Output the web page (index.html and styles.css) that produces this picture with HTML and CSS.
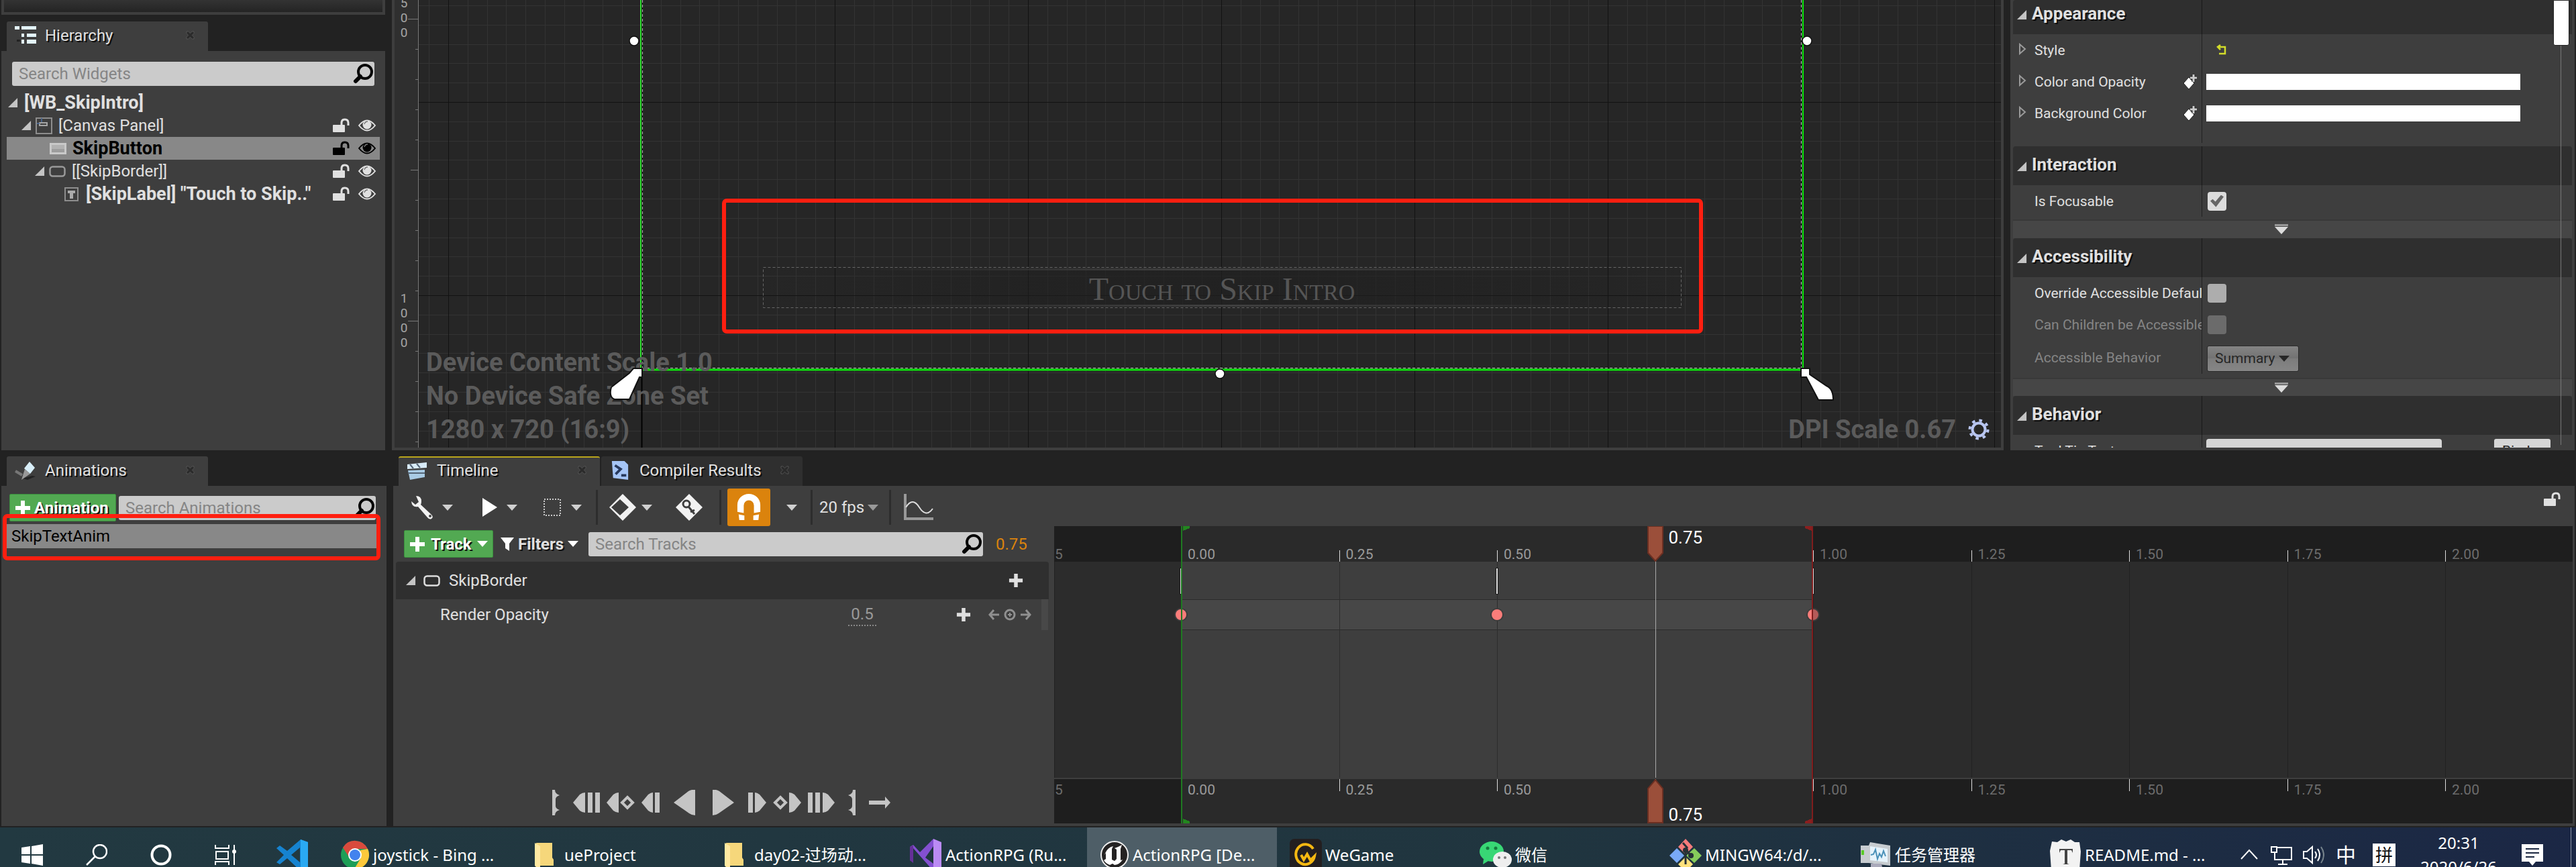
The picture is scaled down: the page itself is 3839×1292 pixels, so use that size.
FILE: index.html
```html
<!DOCTYPE html>
<html lang="en">
<head>
<meta charset="utf-8">
<title>WB_SkipIntro - Widget Blueprint Editor</title>
<link rel="stylesheet" href="styles.css">
</head>
<body>
<svg class="sprite" aria-hidden="true">
  <defs>
    <symbol id="i-search" viewBox="0 0 32 32"><circle cx="18" cy="13" r="10" fill="none" stroke="#050505" stroke-width="4"/><path d="M11 20 4 27" stroke="#050505" stroke-width="6" stroke-linecap="round"/></symbol>
    <symbol id="i-expand" viewBox="0 0 16 16"><path d="M15 0v15H0z" fill="#c4c4c4"/></symbol>
    <symbol id="i-collapsed" viewBox="0 0 12 18"><path d="M2 2v14l8-7z" fill="none" stroke="#9a9a9a" stroke-width="2"/></symbol>
    <symbol id="i-lock" viewBox="0 0 26 22"><rect x="0" y="10" width="18" height="11" rx="1" fill="currentColor"/><path d="M13 11V7q0-5 5-5t5 5v4" fill="none" stroke="currentColor" stroke-width="3"/></symbol>
    <symbol id="i-eye" viewBox="0 0 28 20"><path d="M2 10Q14-5 26 10 14 25 2 10z" fill="none" stroke="currentColor" stroke-width="2"/><circle cx="14" cy="9" r="6.5" fill="currentColor"/><path d="M10 8q1-4 5-4" fill="none" stroke="#777" stroke-width="1.3"/></symbol>
    <symbol id="i-close" viewBox="0 0 14 14"><path d="M1 1h3l3 3 3-3h3v3l-3 3 3 3v3h-3l-3-3-3 3H1v-3l3-3-3-3z" fill="#2b2b2b" stroke="#565656"/></symbol>
    <symbol id="i-border" viewBox="0 0 25 17"><rect x="1.500" y="1.500" width="22" height="14" rx="4" fill="none" stroke="currentColor" stroke-width="2.500"/></symbol>
    <symbol id="i-plus" viewBox="0 0 24 24"><path d="M9 1h6v8h8v6h-8v8H9v-8H1V9h8z" fill="currentColor"/></symbol>
    <symbol id="i-addkey" viewBox="0 0 22 22"><path d="m9 4 8 9-8 9-8-9z" fill="#fff" stroke="#222"/><path d="M16 0v11M11 5h10" stroke="#222" stroke-width="5"/><path d="M16 0v11M11 5h10" stroke="#ccc" stroke-width="3"/></symbol>
    <symbol id="i-more" viewBox="0 0 20 16"><path d="M0 0h20v3H0z" fill="#999"/><path d="M0 4h20L10 15z" fill="#dcdcdc"/></symbol>
    <symbol id="i-folder" viewBox="0 0 28 36"><path d="M2 0h24v22l2 3v9H2z" fill="#f6d77b"/><path d="M0 0 8 5v31l-2 4-6-6z" fill="#ffe9a2"/></symbol>
  </defs>
</svg>

<div class="upper">
  <div class="column">
    <div class="stub"></div>
    <div class="tabs"><div class="tab"><svg class="tab-icon" viewBox="0 0 32 28"><path d="M0 0h7v5H0zM10 0h22v5H10zM10 11h4v5h-4zM18 11h14v5H18zM10 20h4v6h-4zM18 20h14v6H18z" fill="#e3f5fb"/><path d="M3 20h5v3H3z" fill="#222"/></svg><span>Hierarchy</span><button class="close" aria-label="Close Hierarchy"><svg><use href="#i-close"/></svg></button></div></div>
    <section class="panel hierarchy">
      <div class="search"><input type="text" placeholder="Search Widgets" aria-label="Search Widgets"><svg><use href="#i-search"/></svg></div>
      <ul class="tree">
        <li class="bold"><svg class="expand"><use href="#i-expand"/></svg><span>[WB_SkipIntro]</span></li>
        <li class="level-1"><svg class="expand"><use href="#i-expand"/></svg><svg class="kind" viewBox="0 0 25 25"><path d="M1 1h23v23H1z" fill="none" stroke="#8d8d8d" stroke-width="2"/><rect x="6" y="8" width="11" height="4" fill="none" stroke="#a5a5a5" stroke-width="2"/><path d="M9 1v6M2 9h4" stroke="#49648b" stroke-width="2"/></svg><span>[Canvas Panel]</span><button aria-label="Lock"><svg class="lock"><use href="#i-lock"/></svg></button><button aria-label="Visibility"><svg class="eye"><use href="#i-eye"/></svg></button></li>
        <li class="level-2 leaf bold selected"><svg class="kind" viewBox="0 0 25 25"><path d="M0 4h25v17H0z" fill="#c9c9c9"/><path d="M3 7h19v6H3z" fill="#b2b2b2"/><path d="M3 13h19v5H3z" fill="#9d9d9d"/></svg><span>SkipButton</span><button aria-label="Lock"><svg class="lock"><use href="#i-lock"/></svg></button><button aria-label="Visibility"><svg class="eye"><use href="#i-eye"/></svg></button></li>
        <li class="level-2"><svg class="expand"><use href="#i-expand"/></svg><svg class="kind dim"><use href="#i-border"/></svg><span>[[SkipBorder]]</span><button aria-label="Lock"><svg class="lock"><use href="#i-lock"/></svg></button><button aria-label="Visibility"><svg class="eye"><use href="#i-eye"/></svg></button></li>
        <li class="level-3 leaf bold"><svg class="kind" viewBox="0 0 25 25"><path d="M3 3h19v19H3z" fill="none" stroke="#8d8d8d" stroke-width="2"/><path d="M7 7h11v4h-3v8h-5v-8H7z" fill="#aaa"/></svg><span>[SkipLabel] "Touch to Skip.."</span><button aria-label="Lock"><svg class="lock"><use href="#i-lock"/></svg></button><button aria-label="Visibility"><svg class="eye"><use href="#i-eye"/></svg></button></li>
      </ul>
    </section>
  </div>

  <main class="designer">
    <div class="ruler">
      <svg aria-hidden="true"><g stroke="#777" stroke-width="1"><path d="M20 28.500h16M20 478.500h16M24 253.500h12M31 73.500h5M31 118.500h5M31 163.500h5M31 208.500h5M31 298.500h5M31 343.500h5M31 388.500h5M31 433.500h5M31 523.500h5M31 568.500h5M31 613.500h5M31 658.500h5"/></g></svg>
      <div class="mark first">5<br>0<br>0</div>
      <div class="mark second">1<br>0<br>0<br>0</div>
    </div>
    <div class="canvas">
      <svg class="grid" aria-hidden="true">
        <defs><pattern id="grid" x="44" y="-136" width="288" height="288" patternUnits="userSpaceOnUse">
          <path d="M29.500 0v288M58.500 0v288M86.500 0v288M115.500 0v288M144.500 0v288M173.500 0v288M202.500 0v288M230.500 0v288M259.500 0v288M0 29.500h288M0 58.500h288M0 86.500h288M0 115.500h288M0 144.500h288M0 173.500h288M0 202.500h288M0 230.500h288M0 259.500h288" stroke="#333"/>
          <path d="M.5 0v288M0 .5h288" stroke="#121212"/>
        </pattern>
        <linearGradient id="fade"><stop offset="0" stop-color="#1e1e1e" stop-opacity="0"/><stop offset=".4" stop-color="#202020" stop-opacity=".7"/><stop offset=".6" stop-color="#202020" stop-opacity=".7"/><stop offset="1" stop-color="#1e1e1e" stop-opacity="0"/></linearGradient>
        <linearGradient id="edge"><stop offset=".1" stop-color="#444" stop-opacity="0"/><stop offset=".5" stop-color="#444" stop-opacity=".9"/><stop offset=".9" stop-color="#444" stop-opacity="0"/></linearGradient></defs>
        <rect width="100%" height="100%" fill="url(#grid)"/>
        <path d="M332.500 552v116" stroke="#000" stroke-width="2"/>
        <path d="M331 0v550" stroke="#2ee02e" stroke-width="2"/>
        <path d="M332 551h1731" stroke="#0be60b" stroke-width="3"/>
        <path d="M2063 0v550" stroke="#0be60b" stroke-width="2"/>
        <path d="M333.500 0v549M2060.500 0v549M333 548.500h1728" stroke="#bbb" stroke-dasharray="4 3"/>
        <rect x="513" y="400" width="1368" height="58" fill="url(#fade)"/>
        <rect x="513" y="400" width="1368" height="3" fill="url(#edge)"/>
        <rect x="513" y="454" width="1368" height="3" fill="url(#edge)"/>
        <rect x="513.500" y="398.500" width="1368" height="60" fill="none" stroke="#666" stroke-dasharray="4 3"/>
        <g fill="#fff" stroke="#111" stroke-width="1.500"><circle cx="321" cy="61" r="7"/><circle cx="2069" cy="61" r="7"/><circle cx="1194" cy="557" r="7"/></g>
      </svg>
      <p class="preview">Touch to Skip Intro</p>
      <div class="highlight callout"></div>
      <div class="device">Device Content Scale 1.0<br>No Device Safe Zone Set<br>1280 x 720 (16:9)</div>
      <svg class="grid" aria-hidden="true"><g fill="#fff" stroke="#111" stroke-width="2"><path d="M320 549h13v13h-4l-15 33h-22q-9-3-5-18l27-21z"/><path d="M2060 549h13v9l25 17q10 4 10 21h-22l-18-34h-8z"/></g></svg>
      <div class="dpi"><span>DPI Scale 0.67</span><button aria-label="DPI settings"><svg viewBox="0 0 32 32"><g fill="none" stroke="#b9c6f1"><circle cx="16" cy="16" r="9.500" stroke-width="4"/><circle cx="16" cy="16" r="13.500" stroke-width="4" stroke-dasharray="4.500 6.100"/></g></svg></button></div>
    </div>
  </main>

  <aside class="details">
    <section>
      <h2 class="first"><svg><use href="#i-expand"/></svg><span>Appearance</span></h2>
      <div class="prop"><span class="name"><svg class="arrow"><use href="#i-collapsed"/></svg>Style</span><div class="value"><button class="reset" aria-label="Reset to default"><svg viewBox="0 0 18 18"><path d="M4 4h10v10H5M7 1 3 4l4 4" fill="none" stroke="#d2dc2a" stroke-width="2.500"/></svg></button></div></div>
      <div class="prop"><span class="name"><svg class="arrow"><use href="#i-collapsed"/></svg>Color and Opacity<svg class="key"><use href="#i-addkey"/></svg></span><div class="value"><button class="swatch" aria-label="Color and Opacity"></button></div></div>
      <div class="prop"><span class="name"><svg class="arrow"><use href="#i-collapsed"/></svg>Background Color<svg class="key"><use href="#i-addkey"/></svg></span><div class="value"><button class="swatch" aria-label="Background Color"></button></div></div>
      <div class="prop spacer"><span></span><div class="value"></div></div>
    </section>
    <section>
      <h2><svg><use href="#i-expand"/></svg><span>Interaction</span></h2>
      <div class="prop"><label class="name" for="focusable">Is Focusable</label><div class="value"><input type="checkbox" id="focusable" checked></div></div>
      <button class="more" aria-label="Show advanced"><svg><use href="#i-more"/></svg></button>
    </section>
    <section>
      <h2><svg><use href="#i-expand"/></svg><span>Accessibility</span></h2>
      <div class="prop"><label class="name" for="override">Override Accessible Defaults</label><div class="value"><input type="checkbox" id="override"></div></div>
      <div class="prop"><label class="name off" for="children">Can Children be Accessible</label><div class="value"><input type="checkbox" id="children" disabled></div></div>
      <div class="prop tall"><label class="name off" for="behavior">Accessible Behavior</label><div class="value"><div class="combo"><select id="behavior" disabled><option>Summary</option></select></div></div></div>
      <button class="more" aria-label="Show advanced"><svg><use href="#i-more"/></svg></button>
    </section>
    <section>
      <h2><svg><use href="#i-expand"/></svg><span>Behavior</span></h2>
      <div class="prop"><label class="name" for="tooltip">Tool Tip Text</label><div class="value"><input type="text" id="tooltip"><span class="flag"></span><button class="bind">Bind <i class="caret"></i></button></div></div>
    </section>
    <div class="scroll"></div>
  </aside>
</div>

<div class="lower">
  <div class="column animations">
    <div class="tabs"><div class="tab"><svg class="tab-icon" viewBox="0 0 32 28"><path d="M1 15l10 6" stroke="#777" stroke-width="4"/><path d="m12 26 14-4 5 1-12 5z" fill="#222"/><path d="m15 12 8 7-13 9z" fill="#999"/><path d="m22 1 8 9-7 9-9-8z" fill="#d8eef8"/></svg><span>Animations</span><button class="close" aria-label="Close Animations"><svg><use href="#i-close"/></svg></button></div></div>
    <section class="panel">
      <div class="bar"><button class="green"><svg><use href="#i-plus"/></svg>Animation</button><div class="search"><input type="text" placeholder="Search Animations" aria-label="Search Animations"><svg><use href="#i-search"/></svg></div></div>
      <ul class="list"><li>SkipTextAnim</li></ul>
      <div class="highlight"></div>
    </section>
  </div>

  <div class="column">
    <div class="tabs">
      <div class="tab active"><svg class="tab-icon" viewBox="0 0 32 28"><path d="m1 5 29-3v8L1 12z" fill="#d8ebf7"/><path d="m2 14 25-1v11L5 28z" fill="#a9cbe4"/><path d="m5 5 5 6m5-7 5 6M2 18h25" stroke="#567" stroke-width="2"/></svg><span>Timeline</span><button class="close" aria-label="Close Timeline"><svg><use href="#i-close"/></svg></button></div>
      <div class="tab back"><svg class="tab-icon" viewBox="0 0 32 30"><path d="M3 0h20l6 6v24L5 27z" fill="#a5c5f6"/><path d="m8 7 9 6-8 8m9 2h8" fill="none" stroke="#27395c" stroke-width="4"/></svg><span>Compiler Results</span><button class="close" aria-label="Close Compiler Results"><svg><use href="#i-close"/></svg></button></div>
    </div>
    <section class="panel timeline">
      <div class="toolbar">
        <button aria-label="Options"><svg viewBox="0 0 36 36"><path d="M8 1q8 0 8 8 0 3-1 5l15 14q5 4 1 7-3 2-7-3L11 17q-9 2-10-8l6 5 5-4z" fill="#f2f2f2"/><circle cx="29" cy="31" r="2" fill="#444"/></svg><i class="caret"></i></button>
        <button aria-label="Playback"><svg viewBox="0 0 36 36"><path d="m11 4 22 14-22 14z" fill="#fff"/></svg><i class="caret"></i></button>
        <button class="selection" aria-label="Selection"><svg viewBox="0 0 36 36"><rect x="7" y="6" width="24" height="24" fill="none" stroke="#ccc" stroke-width="2" stroke-dasharray="2 2"/></svg><i class="caret"></i></button>
        <hr>
        <button class="wide" aria-label="Key options"><svg viewBox="0 0 40 40"><path d="m20 0 20 20-20 20L0 20z" fill="#f2f2f2"/><path d="m16 8 13 12-13 12L3 20z" fill="#3e3e3e"/></svg><i class="caret"></i></button>
        <button class="wide auto" aria-label="Auto key"><svg viewBox="0 0 40 40"><path d="m20 0 20 20-20 20L0 20z" fill="#f2f2f2"/><circle cx="16" cy="15" r="5" fill="none" stroke="#3e3e3e" stroke-width="3"/><path d="m19 19 9 11m-6-3 6-3" fill="none" stroke="#3e3e3e" stroke-width="3"/></svg></button>
        <hr>
        <button class="snap" aria-label="Snapping"><svg viewBox="0 0 40 42"><path d="M2 28V17a18 17 0 0 1 36 0v11l-10 2V18a8 8 0 0 0-16 0v12zM4 32l9 2v7H5zM36 32l-9 2v7h8z" fill="#fff"/></svg></button>
        <button class="only-caret" aria-label="Snapping options"><i class="caret"></i></button>
        <hr>
        <div class="fps"><select aria-label="Frame rate"><option>20 fps</option></select><i class="caret"></i></div>
        <hr>
        <button class="curve" aria-label="Curve editor"><svg viewBox="0 0 44 40"><path d="M2 0v37h42" fill="none" stroke="#999" stroke-width="4"/><path d="M3 20q10-16 20 0t20 2" fill="none" stroke="#ddd" stroke-width="2"/></svg></button>
        <button class="toolbar-lock" aria-label="Lock timeline"><svg><use href="#i-lock"/></svg></button>
      </div>
      <div class="sequencer">
        <div class="tracks">
          <div class="bar">
            <button class="green"><svg><use href="#i-plus"/></svg>Track <i class="caret"></i></button>
            <button class="filters"><svg viewBox="0 0 20 20"><path d="M0 0h20l-7 9v11l-6-4V9z" fill="#fff"/></svg>Filters<i class="caret"></i></button>
            <div class="search"><input type="text" placeholder="Search Tracks" aria-label="Search Tracks"><svg><use href="#i-search"/></svg></div>
            <output>0.75</output>
          </div>
          <div class="track"><svg class="expand"><use href="#i-expand"/></svg><svg class="kind"><use href="#i-border"/></svg><span>SkipBorder</span><button aria-label="Add track"><svg><use href="#i-plus"/></svg></button></div>
          <div class="subtrack"><label for="opacity">Render Opacity</label><input id="opacity" type="text" value="0.5"><button aria-label="Add section"><svg><use href="#i-plus"/></svg></button><svg class="keys" viewBox="0 0 64 18"><g fill="none" stroke="#909090" stroke-width="3"><path d="M16 9H2m6-7L2 9l6 7M48 9h14m-6-7 6 7-6 7"/><circle cx="32" cy="9" r="7"/><path d="M32 6v6M29 9h6" stroke-width="2"/></g></svg><i class="grip"></i></div>
          <div class="transport">
            <button aria-label="Set start"><svg width="11" height="38" viewBox="0 0 11 38"><path d="M0 0h4q0 6 7 8-6 2-6 6v10q0 4 6 6-7 2-7 8H0z"/></svg></button>
            <span>
              <button aria-label="To front"><svg width="40" height="30" viewBox="0 0 40 30"><path d="M0 15 10 3q4-3 8-3v30q-4 0-8-3zM22 0h7v30h-7zM33 0h7v30h-7z"/></svg></button>
              <button aria-label="Previous key"><svg width="42" height="30" viewBox="0 0 42 30"><path d="M0 15 10 3q4-3 8-3v30q-4 0-8-3z"/><path d="m31 7 8 8-8 8-8-8z" fill="none" stroke="#c4c4c4" stroke-width="4"/></svg></button>
              <button aria-label="Previous frame"><svg width="28" height="30" viewBox="0 0 28 30"><path d="M0 15 10 3q4-3 7-3v30q-3 0-7-3zM20 0h7v30h-7z"/></svg></button>
            </span>
            <span class="plays">
              <button aria-label="Play reverse"><svg width="32" height="38" viewBox="0 0 32 38"><path d="M0 19 22 2q5-3 10-2v38q-5 0-9-3z"/></svg></button>
              <button aria-label="Play"><svg width="32" height="38" viewBox="0 0 32 38"><path d="M32 19 10 2Q5-1 0 0v38q5 0 9-3z"/></svg></button>
            </span>
            <span>
              <button aria-label="Next frame"><svg width="28" height="30" viewBox="0 0 28 30"><path d="M28 15 18 3q-4-3-7-3v30q3 0 7-3zM1 0h7v30H1z"/></svg></button>
              <button aria-label="Next key"><svg width="42" height="30" viewBox="0 0 42 30"><path d="M42 15 32 3q-4-3-8-3v30q4 0 8-3z"/><path d="m11 7 8 8-8 8-8-8z" fill="none" stroke="#c4c4c4" stroke-width="4"/></svg></button>
              <button aria-label="To end"><svg width="40" height="30" viewBox="0 0 40 30"><path d="M40 15 30 3q-4-3-8-3v30q4 0 8-3zM0 0h7v30H0zM11 0h7v30h-7z"/></svg></button>
            </span>
            <button aria-label="Set end"><svg width="11" height="38" viewBox="0 0 11 38"><path d="M11 0H7q0 6-7 8 6 2 6 6v10q0 4-6 6 7 2 7 8h4z"/></svg></button>
            <button aria-label="No looping"><svg width="32" height="20" viewBox="0 0 32 20"><path d="M0 7h24V1l8 9-8 9v-6H0z"/></svg></button>
          </div>
        </div>
        <div class="sequence">
          <div class="scale">
            <div class="tick out"><span class="cut">5</span></div>
            <div class="tick">0.00</div><div class="tick">0.25</div><div class="tick">0.50</div><div class="tick"><div class="playhead"><svg viewBox="0 0 26 53"><path d="M2 0h22v40L13 52 2 40z" fill="#9b4f3a" stroke="#6b2f22" stroke-width="2"/></svg><b>0.75</b></div></div>
            <div class="tick out">1.00</div><div class="tick out">1.25</div><div class="tick out">1.50</div><div class="tick out">1.75</div><div class="tick out">2.00</div>
          </div>
          <div class="lanes">
            <div class="lane out"></div>
            <div class="lane"><i class="bar-key"></i><i class="dot"></i></div><div class="lane"></div><div class="lane"><i class="bar-key"></i><i class="dot"></i></div><div class="lane now"></div>
            <div class="lane out"><i class="bar-key"></i><i class="dot"></i></div><div class="lane out"></div><div class="lane out"></div><div class="lane out"></div><div class="lane out"></div>
          </div>
          <div class="scale bottom">
            <div class="tick out"><span class="cut">5</span></div>
            <div class="tick">0.00</div><div class="tick">0.25</div><div class="tick">0.50</div><div class="tick"><div class="playhead"><svg viewBox="0 0 26 66"><path d="M2 65h22V14L13 1 2 14z" fill="#9b4f3a" stroke="#6b2f22" stroke-width="2"/></svg><b>0.75</b></div></div>
            <div class="tick out">1.00</div><div class="tick out">1.25</div><div class="tick out">1.50</div><div class="tick out">1.75</div><div class="tick out">2.00</div>
          </div>
          <div class="range"><div></div></div>
        </div>
      </div>
    </section>
  </div>
</div>

<footer class="taskbar">
  <nav>
    <button class="sys" aria-label="Start"><svg viewBox="0 0 32 32"><path d="M0 5 13 3v12H0zM15 3 32 0v15H15zM0 17h13v12L0 27zM15 17h17v15l-17-3z" fill="#fff"/></svg></button>
    <button class="sys" aria-label="Search"><svg viewBox="0 0 32 32"><g fill="none" stroke="#fff" stroke-width="2.500"><circle cx="21" cy="11" r="10"/><path d="M14 18 1 31"/></g></svg></button>
    <button class="sys" aria-label="Cortana"><svg viewBox="0 0 32 32"><circle cx="16" cy="16" r="13.500" fill="none" stroke="#fff" stroke-width="4"/></svg></button>
    <button class="sys" aria-label="Task view"><svg viewBox="0 0 32 32"><g fill="none" stroke="#fff" stroke-width="2"><path d="M1 1v5h20V1M2 11h18v11H2zM1 31v-5h20v5M29 1v30"/></g><circle cx="29" cy="11" r="3" fill="#fff"/></svg></button>
    <button class="sys code" aria-label="Visual Studio Code"><svg viewBox="0 0 48 48"><path d="m36 1 11 4v38l-11 5L16 29 5 38l-5-3 11-11L0 14l5-4 11 8zM35 13 22 24l13 11z" fill="#1683d0" fill-rule="evenodd"/><path d="m36 1 11 4v38l-11 5z" fill="#2aa9f2"/></svg></button>
  </nav>
  <button class="app"><svg viewBox="0 0 44 44"><circle cx="22" cy="22" r="21" fill="#1e9e57"/><path d="M4 11a21 21 0 0 1 37 2H22l-9 12z" fill="#d94a3d"/><path d="M41 13a21 21 0 0 1-20 30l10-17-1-11z" fill="#fdc93c"/><circle cx="22" cy="22" r="10" fill="#fff"/><circle cx="22" cy="22" r="8" fill="#4383ee"/></svg>joystick - Bing ...</button>
  <button class="app folder"><svg><use href="#i-folder"/></svg>ueProject</button>
  <button class="app folder"><svg><use href="#i-folder"/></svg>day02-过场动...</button>
  <button class="app"><svg class="big" viewBox="0 0 48 48"><path d="m35 0 12 5v38l-12 5z" fill="#bb8bf4"/><path d="M35 0v48L5 14v20l-5-2V12l5-3 10 11zM23 28l12 9V11z" fill="#8350d0" fill-rule="evenodd"/><path d="M5 10 0 12v20l5 4z" fill="#653098"/></svg>ActionRPG (Ru...</button>
  <button class="app current"><svg viewBox="0 0 44 44"><circle cx="22" cy="22" r="20" fill="#242222" stroke="#eee" stroke-width="2"/><path d="M7 22q4-11 13-13l-2 4v16l4 2 3-3V14l-3-2q6-2 11-5l-2 6v17l3-1q-4 7-12 8l-3-2-4 2q-6-2-9-7l3-2V19z" fill="#fff"/></svg>ActionRPG [De...</button>
  <button class="app"><svg class="big" viewBox="0 0 48 48"><rect width="48" height="48" rx="7" fill="#231f20"/><path d="M35 15a14 15 0 1 0 2 11l-6 6-5-9-5 8-4-7" fill="none" stroke="#f5b812" stroke-width="4"/></svg>WeGame</button>
  <button class="app"><svg class="big" viewBox="0 0 48 48"><ellipse cx="18" cy="19" rx="18" ry="15" fill="#38d775"/><path d="m6 30-1 8 8-5z" fill="#38d775"/><ellipse cx="34" cy="31" rx="14" ry="12" fill="#eee"/><circle cx="12" cy="14" r="2.500" fill="#16793e"/><circle cx="24" cy="14" r="2.500" fill="#16793e"/><circle cx="29" cy="28" r="2" fill="#777"/><circle cx="38" cy="28" r="2" fill="#777"/></svg>微信</button>
  <button class="app"><svg class="big" viewBox="0 0 48 48"><path d="m24 0 11 12-11 11-11-11z" fill="#f67b7b"/><path d="m37 14 11 11-11 11-12-11z" fill="#86cc5b"/><path d="m11 14 11 11-11 11L0 25z" fill="#79a9f6"/><path d="m24 27 11 11-11 11-11-11z" fill="#ffe17c"/><path d="m20 6 7 8m-3 0v24m1-21 7 8" stroke="#263036" stroke-width="3" fill="none"/><circle cx="24" cy="17" r="4" fill="#263036"/><circle cx="32" cy="25" r="4" fill="#263036"/></svg>MINGW64:/d/...</button>
  <button class="app"><svg class="big" viewBox="0 0 48 48"><path d="M2 10h12l2-5 30 5v30l-32-4H2z" fill="#c7ccd0"/><path d="m16 11 26 4v20l-26-3z" fill="#e6f3fb"/><path d="m17 24 4-1 3-7 3 14 3-8 3 5 3-9 3 8" fill="none" stroke="#4b91b9" stroke-width="2"/><path d="M17 37h16l2 11H17z" fill="#aab"/><path d="M3 17h4v7H3z" fill="#5acc28"/></svg>任务管理器</button>
  <button class="app"><svg class="big" viewBox="0 0 48 48"><path d="m4 4 8 1 6-4 7 3 7-3 6 4 7 0 2 14-2 28H3L1 18z" fill="#f2f2f2"/><path d="M15 15h20v6l-2-4h-6v20l3 1H20l3-1V17h-6l-2 4z" fill="#444"/></svg>README.md - ...</button>
  <div class="tray">
    <button aria-label="Hidden icons"><svg viewBox="0 0 32 32"><path d="m4 22 12-13 12 13" fill="none" stroke="#fff" stroke-width="2"/></svg></button>
    <svg viewBox="0 0 32 32"><g fill="none" stroke="#fff" stroke-width="2"><path d="M10 5h21v18H6V12M1 4h8v8H1zM18 23v7m-7 0h14"/></g></svg>
    <svg viewBox="0 0 32 32"><g fill="none" stroke="#fff" stroke-width="2"><path d="M1 11h5l8-7v24l-8-7H1zM18 11q4 5 0 10m4-14q6 9 0 18"/><path d="M27 4q8 12 0 24" stroke="#78858d"/></g></svg>
    <span class="ime">中</span>
    <span class="ime boxed">拼</span>
    <time>20:31<br>2020/6/26</time>
    <button aria-label="Notifications"><svg viewBox="0 0 32 32"><path d="M0 0h32v26H21l-5 6-5-6H0z" fill="#fff"/><path d="M6 7h20M6 13h20M6 19h13" stroke="#1b2740" stroke-width="2"/></svg></button>
  </div>
</footer>
</body>
</html>
```
FILE: styles.css
```css
* { box-sizing: border-box; }
body {
  margin: 0;
  height: 100vh;
  display: grid;
  grid-template-rows: 671fr 562fr 59px;
  overflow: hidden;
  background: #222;
  color: #e0e0e0;
  font: 24px/34px Roboto, sans-serif;
}
.sprite { position: absolute; width: 0; height: 0; }
svg { display: block; flex: none; }
button, input, select { font: inherit; color: inherit; margin: 0; padding: 0; border: 0; background: none; }
button { display: flex; align-items: center; }
ul { list-style: none; margin: 0; padding: 0; }
.caret { width: 0; height: 0; border: 8px solid transparent; border-top: 9px solid #d0d0d0; border-bottom: 0; flex: none; }

.upper, .lower { display: grid; gap: 10px; padding: 0 2px; min-height: 0; }
.upper { grid-template-columns: 572px minmax(0, 1fr) 841px; }
.lower { grid-template-columns: 574px minmax(0, 1fr); padding: 9px 2px 2px; }
.column { display: flex; flex-direction: column; min-width: 0; min-height: 0; }
.stub { height: 22px; margin-bottom: 10px; background: linear-gradient(#333, #242424); border: 4px solid #3e3e3e; border-top: 0; flex: none; }
.tabs { display: flex; gap: 2px; padding-left: 8px; }
.tab { display: flex; align-items: center; width: 300px; height: 44px; padding: 0 20px 3px 12px; gap: 13px; background: #3e3e3e; border-radius: 3px 3px 0 0; text-shadow: 2px 2px 0 #0c0c0c; }
.tab.active { border-top: 2px solid #b9a51c; padding-bottom: 5px; }
.tab.back { background: #2f2f2f; }
.tab-icon { width: 32px; height: 28px; }
.close { margin-left: auto; }
.close svg { width: 13px; height: 13px; }
.panel { flex: 1; min-height: 0; background: #3e3e3e; position: relative; }

.search { display: flex; align-items: center; height: 36px; background: #cbcbcb; border-radius: 3px; flex: 1; }
.search input { flex: 1; min-width: 0; padding-left: 10px; color: #222; outline: 0; }
.search input::placeholder { color: #858585; opacity: 1; }
.search svg { width: 32px; height: 32px; }

.hierarchy { padding: 16px 8px; }
.hierarchy .search { margin: 0 8px 8px; }
.tree li { display: flex; align-items: center; height: 34px; padding: 0 5px 0 2px; }
.tree span { margin-right: auto; padding-left: 9px; }
.tree .level-1 { padding-left: 22px; }
.tree .level-2 { padding-left: 42px; }
.tree .level-3 { padding-left: 64px; }
.tree .leaf { padding-left: 64px; }
.tree .level-3.leaf { padding-left: 84px; }
.bold { font-weight: 700; font-size: 27px; }
.expand { width: 15px; height: 15px; }
.kind { width: 25px; height: 25px; color: #ddd; }
.tree .kind { margin-left: 6px; }
.tree .leaf .kind { margin-left: 0; }
.kind.dim { height: 17px; color: #999; }
.lock { width: 26px; height: 22px; }
.eye { width: 28px; height: 20px; margin-left: 11px; }
.selected { background: #888; color: #000; }

.designer { display: flex; border: 4px solid #3e3e3e; border-top: 0; overflow: hidden; min-height: 0; }
.ruler { position: relative; width: 36px; background: #2f2f2f; border-right: 1px solid #777; flex: none; }
.ruler svg { width: 36px; height: 100%; }
.mark { position: absolute; left: 8px; width: 12px; font-size: 19px; line-height: 22px; text-align: center; color: #a5a5a5; }
.mark.first { top: -6px; }
.mark.second { top: 434px; }
.canvas { position: relative; flex: 1; background: #262626; overflow: hidden; }
.grid { position: absolute; inset: 0; width: 100%; height: 100%; }
.preview { position: absolute; left: 513px; width: 1368px; top: 400px; margin: 0; text-align: center; font: 48px/62px "Liberation Serif", serif; font-variant: small-caps; color: #555; }
.highlight { position: absolute; border: 6px solid #ff1f10; border-radius: 7px; pointer-events: none; }
.callout { left: 452px; top: 296px; width: 1462px; height: 201px; }
.device { position: absolute; left: 11px; bottom: 2px; font: 700 38px/50px Roboto, sans-serif; color: #5b5b5b; }
.dpi { position: absolute; right: 17px; bottom: 2px; display: flex; align-items: center; gap: 18px; font: 700 38px/50px Roboto, sans-serif; color: #5b5b5b; }
.dpi svg { width: 32px; height: 32px; }

.details { position: relative; background: #3e3e3e; padding: 0 4px; border-bottom: 4px solid #3e3e3e; overflow: hidden; min-height: 0; font-size: 21px; }
.details h2 { display: flex; align-items: center; gap: 7px; height: 58px; margin: 0; padding: 0 6px 4px; font-size: 26px; text-shadow: 2px 2px 0 #0c0c0c; border-radius: 4px 4px 0 0; background: linear-gradient(90deg, transparent 281px, #191919 281px, #191919 282px, transparent 282px), #2f2f2f; }
.details h2.first { height: 51px; padding-bottom: 12px; }
.details h2 svg { width: 15px; height: 15px; margin-top: 6px; }
.prop { display: grid; grid-template-columns: 281px 1fr; height: 47px; }
.prop .name { display: flex; align-items: center; padding: 1px 0 0 32px; overflow: hidden; white-space: nowrap; }
.prop .off { color: #858585; }
.arrow { width: 12px; height: 18px; margin: -4px 12px 0 -24px; }
.key { width: 22px; height: 22px; margin-left: auto; margin-right: 6px; }
.value { display: flex; align-items: center; padding-left: 6px; border-left: 1px solid #222; }
.prop.spacer { height: 21px; margin-bottom: 5px; }
.prop.tall { height: 50px; }
.prop.tall + .more { height: 27px; margin-top: 6px; }
.reset { padding-left: 14px; }
.reset svg { width: 18px; height: 18px; }
.swatch { width: 468px; height: 24px; background: #fff; }
.value input[type=checkbox] { appearance: none; display: grid; place-items: center; width: 28px; height: 28px; margin-left: 2px; border-radius: 4px; background: #adadad; }
.value input[type=checkbox]:checked { background: #dcdcdc; }
.value input[type=checkbox]:checked::before { content: ""; width: 20px; height: 18px; background: #666; clip-path: polygon(0 50%, 18% 35%, 38% 55%, 80% 0, 100% 15%, 42% 100%); }
.value input[type=checkbox]:disabled { background: #6b6b6b; }
.combo { position: relative; margin: 4px 0 0 1px; }
.combo select { appearance: none; width: 137px; height: 39px; padding-left: 11px; color: #262626; opacity: 1; border: 1px solid #2b2b2b; border-radius: 3px; background: linear-gradient(#848484, #727272 50%, #7c7c7c 50%, #868686); }
.combo::after { content: ""; position: absolute; right: 14px; top: 15px; border: 8px solid transparent; border-top: 9px solid #262626; border-bottom: 0; }
.more { display: flex; justify-content: center; width: 100%; height: 28px; margin-top: 4px; padding-right: 33px; background: #464646; border-top: 2px solid #393939; }
.more svg { width: 20px; height: 16px; }
.value input[type=text] { width: 351px; height: 36px; background: #d6d6d6; border-radius: 4px; padding-left: 10px; color: #222; }
.flag { width: 16px; height: 6px; margin: 0 50px 0 12px; background: #888; }
.bind { width: 84px; height: 36px; padding-left: 12px; background: #d6d6d6; color: #222; border-radius: 3px; }
.bind .caret { border-top-color: #555; margin-left: 4px; }
.scroll { position: absolute; right: 20px; top: 0; bottom: 4px; width: 1px; background: #777; }
.scroll::before { content: ""; position: absolute; left: -11px; top: 0; width: 22px; height: 66px; background: #fff; border: 1px solid #222; border-radius: 0 0 3px 3px; }

.bar { display: flex; align-items: center; gap: 4px; }
.animations .bar { padding: 12px 16px 4px 12px; }
.green { gap: 5px; height: 41px; padding: 0 10px 0 7px; background: #52a952; border: 1px solid #3c8f3f; border-radius: 2px; color: #fff; font-weight: 700; text-shadow: 2px 2px 0 #111; }
.green svg { width: 24px; height: 24px; }
.green .caret { border-top-color: #fff; margin-left: auto; }
.animations .green { width: 159px; }
.list { margin: 0 9px 0 8px; }
.list li { height: 36px; padding-left: 7px; line-height: 36px; background: #888; color: #000; }
.animations .highlight { left: 2px; right: 9px; top: 42px; height: 69px; }

.timeline { display: flex; flex-direction: column; }
.toolbar { display: flex; align-items: center; height: 60px; padding: 4px 0 0 26px; }
.toolbar svg { width: 36px; height: 36px; }
.toolbar button { gap: 11px; width: 96px; }
.toolbar .selection { width: 84px; }
.toolbar hr { width: 3px; height: 52px; margin: 0; border: 0; background: #2d2d2d; flex: none; }
.toolbar .wide { width: 99px; padding-left: 17px; gap: 8px; }
.toolbar .auto { width: 82px; }
.toolbar .wide svg { width: 40px; height: 40px; }
.toolbar .snap { width: 64px; height: 56px; margin-left: 9px; justify-content: center; background: #db830d; border-radius: 3px; }
.toolbar .snap svg { width: 38px; height: 42px; }
.toolbar .only-caret { width: 60px; padding-left: 24px; }
.fps { display: flex; align-items: center; gap: 4px; width: 114px; padding-left: 10px; }
.fps select { appearance: none; width: 68px; }
.fps .caret { border-top-color: #999; }
.toolbar .curve { width: 66px; padding-left: 19px; }
.toolbar .curve svg { width: 44px; height: 40px; }
.toolbar .toolbar-lock { width: 26px; margin: -24px 20px 0 auto; }
.toolbar .toolbar-lock svg { width: 26px; height: 22px; }
.sequencer { flex: 1; min-height: 0; display: grid; grid-template-columns: 985px minmax(0, 1fr); }
.tracks { display: flex; flex-direction: column; }
.tracks .bar { height: 53px; padding: 0 39px 0 16px; }
.tracks .bar .search { margin: 0 15px 0 11px; }
.tracks .green { width: 133px; gap: 8px; padding-right: 7px; }
.filters { gap: 6px; margin-left: 7px; font-weight: 700; text-shadow: 2px 2px 0 #111; }
.filters svg { width: 20px; height: 20px; }
.filters .caret { border-top-color: #fff; }
output { width: 48px; color: #db830d; }
.track { display: flex; align-items: center; height: 56px; margin: 0 8px 0 4px; padding: 0 38px 0 15px; background: #2f2f2f; border-radius: 4px 4px 0 0; }
.track .kind { margin: 0 13px 0 11px; height: 17px; }
.track button { margin-left: auto; }
.track button svg, .subtrack button svg { width: 22px; height: 22px; }
.subtrack { display: flex; align-items: center; height: 46px; padding: 0 9px 0 70px; }
.subtrack input { width: 42px; height: 34px; margin-left: auto; margin-right: 119px; text-align: center; color: #999; border-bottom: 2px dotted #888; }
.keys { width: 64px; height: 18px; margin: 0 15px 0 26px; }
.grip { width: 10px; height: 46px; background: #484848; }
.transport { display: flex; justify-content: center; align-items: center; gap: 20px; margin-top: auto; padding-bottom: 17px; height: 54px; padding-right: 8px; }
.transport span { display: flex; gap: 10px; align-items: center; }
.transport .plays { gap: 26px; }
.transport svg { fill: #c4c4c4; }

.sequence { position: relative; display: flex; flex-direction: column; margin: 0 3px 4px 0; font-size: 21px; overflow: hidden; }
.scale, .lanes, .range { display: grid; grid-template-columns: 378fr repeat(8, 471fr) 380fr; }
.scale { height: 53px; color: #9a9a9a; }
.tick { position: relative; padding: 30px 0 0 10px; line-height: 24px; background: #2a2a2a; }
.tick::before { content: ""; position: absolute; left: 0; bottom: 0; width: 1px; height: 18px; background: #ddd; }
.tick.out { background: #1e1e1e; color: #6c6c6c; }
.tick:first-child { padding-left: 1px; }
.tick:first-child::before { display: none; }
.lanes { flex: 1; }
.lane { position: relative; border-left: 1px solid #2d2d2d; background: linear-gradient(#3e3e3e 56px, #2b2b2b 56px, #2b2b2b 57px, #474747 57px, #474747 101px, #2b2b2b 101px, #2b2b2b 102px, #3e3e3e 102px); }
.lane.out { background: #2c2c2c; border-color: #222; }
.lane.now { border-color: #aaa; }
.bar-key { position: absolute; left: -3px; top: 9px; width: 4px; height: 40px; background: #e0e0e0; border: 1px solid #1c1c1c; }
.dot { position: absolute; left: -9px; top: 71px; width: 16px; height: 16px; border-radius: 50%; background: #fa7d7a; box-shadow: 0 0 0 2px #3c3c3c; }
.out .dot { background: linear-gradient(90deg, #fa7d7a 50%, #b55b59 50%); }
.scale.bottom { height: 68px; border-top: 2px solid #3e3e3e; }
.bottom .tick { padding-top: 4px; }
.bottom .tick::before { top: 0; }
.playhead { position: absolute; left: -13px; top: 0; z-index: 1; display: flex; gap: 7px; color: #fff; }
.playhead svg { width: 26px; height: 53px; }
.bottom .playhead svg { height: 66px; }
.playhead b { font: 26px/34px Roboto, sans-serif; }
.bottom .playhead b { align-self: flex-end; line-height: 26px; }
.range { position: absolute; inset: 0; pointer-events: none; }
.range div { grid-column: 2 / 6; border-left: 2px solid #1f7a22; border-right: 2px solid #7f1d1d; position: relative; }
.range div::before, .range div::after { content: ""; position: absolute; top: 0; width: 11px; height: 100%; }
.range div::before { left: 0; background: linear-gradient(160deg, #23861f 50%, transparent 50%) top / 10px 10px no-repeat, linear-gradient(20deg, #23861f 50%, transparent 50%) bottom / 10px 10px no-repeat; }
.range div::after { right: 0; background: linear-gradient(200deg, #8a1f1f 50%, transparent 50%) top / 10px 10px no-repeat, linear-gradient(340deg, #8a1f1f 50%, transparent 50%) bottom / 10px 10px no-repeat; }

.taskbar { display: flex; overflow: hidden; color: #fff; background: linear-gradient(90deg, #223941, #20353f 60%, #1b2745); font: 24px/32px "Noto Sans", "Noto Sans CJK SC", sans-serif; }
.taskbar > * { height: 82px; flex: none; }
.taskbar nav { display: flex; }
.sys { width: 96px; justify-content: center; }
.sys svg { width: 32px; height: 32px; }
.sys.code { width: 104px; }
.sys.code svg { width: 48px; height: 48px; }
.app { width: 283px; gap: 5px; padding-left: 19px; white-space: nowrap; }
.app svg { width: 44px; height: 44px; }
.app svg.big { width: 48px; height: 48px; }
.app.folder { padding-left: 26px; gap: 16px; }
.app.folder svg { width: 28px; height: 36px; overflow: visible; }
.app.current { background: #4e5e67; }
.taskbar .tray { display: flex; align-items: center; flex: 1; gap: 16px; padding-left: 18px; margin-right: 7px; border-right: 1px solid #8a93a5; }
.tray svg { width: 32px; height: 32px; }
.ime { width: 32px; font-size: 30px; text-align: center; }
.boxed { margin-left: 9px; background: #fff; color: #111; font-size: 26px; outline: 1px solid #fff; }
.tray time { margin-left: auto; text-align: center; line-height: 36px; }
.tray > button:last-child { margin: 0 41px 0 21px; }
```
